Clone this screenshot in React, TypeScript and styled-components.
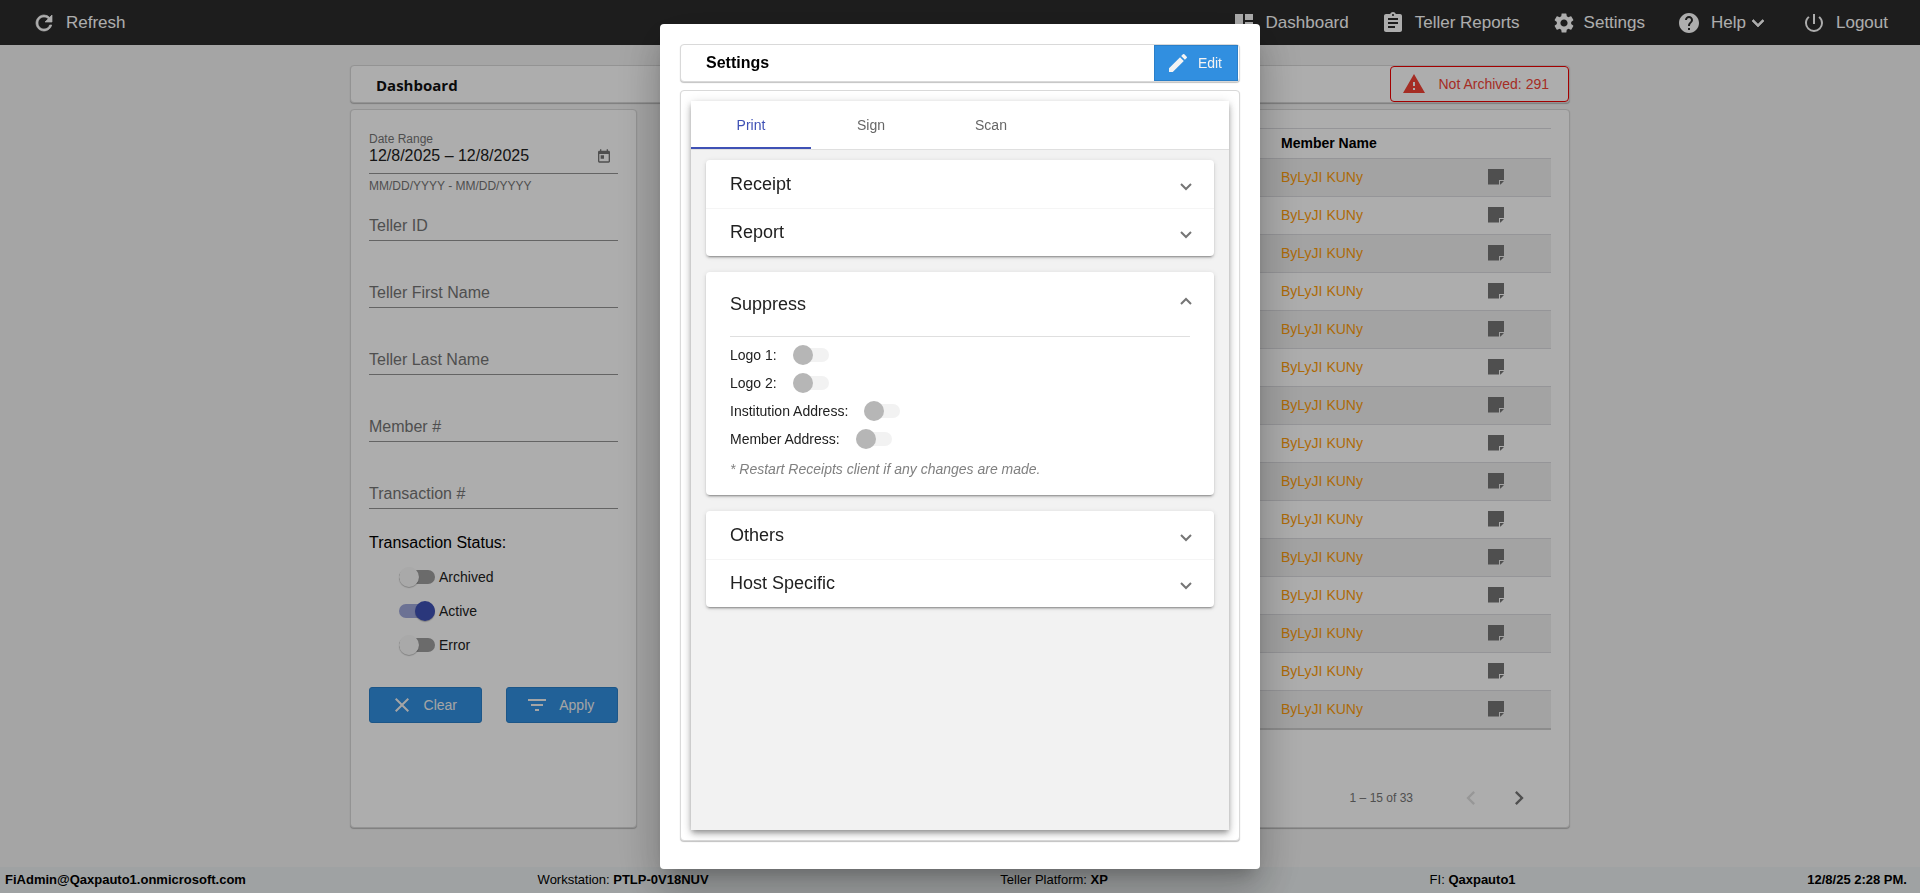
import React from "react";
import styled, { createGlobalStyle } from "styled-components";

const GlobalStyle = createGlobalStyle`
  *, *::before, *::after { box-sizing: border-box; }
  html, body, #root { height: 100%; }
  body {
    margin: 0;
    background: #f3f3f3;
    color: #000;
    font-family: "Liberation Sans", Arial, Helvetica, sans-serif;
    font-size: 14px;
  }
  button, input { font: inherit; color: inherit; }
  h1, h2, p { margin: 0; }
`;

const icons = {
  refresh:
    "M17.65 6.35A7.958 7.958 0 0 0 12 4c-4.42 0-7.99 3.58-7.99 8s3.57 8 7.99 8c3.73 0 6.84-2.55 7.73-6h-2.08A5.99 5.99 0 0 1 12 18c-3.31 0-6-2.69-6-6s2.69-6 6-6c1.66 0 3.14.69 4.22 1.78L13 11h7V4l-2.35 2.35z",
  dashboard: "M3 13h8V3H3v10zm0 8h8v-6H3v6zm10 0h8V11h-8v10zm0-18v6h8V3h-8z",
  reports:
    "M19 3h-4.18C14.4 1.84 13.3 1 12 1c-1.3 0-2.4.84-2.82 2H5c-1.1 0-2 .9-2 2v14c0 1.1.9 2 2 2h14c1.1 0 2-.9 2-2V5c0-1.1-.9-2-2-2zm-7 0c.55 0 1 .45 1 1s-.45 1-1 1-1-.45-1-1 .45-1 1-1zm2 14H7v-2h7v2zm3-4H7v-2h10v2zm0-4H7V7h10v2z",
  settings:
    "M19.14 12.94c.04-.3.06-.61.06-.94 0-.32-.02-.64-.07-.94l2.03-1.58a.49.49 0 0 0 .12-.61l-1.92-3.32a.488.488 0 0 0-.59-.22l-2.39.96c-.5-.38-1.03-.7-1.62-.94l-.36-2.54a.484.484 0 0 0-.48-.41h-3.84c-.24 0-.43.17-.47.41l-.36 2.54c-.59.24-1.13.57-1.62.94l-2.39-.96c-.22-.08-.47 0-.59.22L2.74 8.87c-.12.21-.08.47.12.61l2.03 1.58c-.05.3-.09.63-.09.94s.02.64.07.94l-2.03 1.58a.49.49 0 0 0-.12.61l1.92 3.32c.12.22.37.29.59.22l2.39-.96c.5.38 1.03.7 1.62.94l.36 2.54c.05.24.24.41.48.41h3.84c.24 0 .44-.17.47-.41l.36-2.54c.59-.24 1.13-.56 1.62-.94l2.39.96c.22.08.47 0 .59-.22l1.92-3.32c.12-.22.07-.47-.12-.61l-2.01-1.58zM12 15.6c-1.98 0-3.6-1.62-3.6-3.6s1.62-3.6 3.6-3.6 3.6 1.62 3.6 3.6-1.62 3.6-3.6 3.6z",
  help: "M12 2C6.48 2 2 6.48 2 12s4.48 10 10 10 10-4.48 10-10S17.52 2 12 2zm1 17h-2v-2h2v2zm2.07-7.75-.9.92C13.45 12.9 13 13.5 13 15h-2v-.5c0-1.1.45-2.1 1.17-2.83l1.24-1.26c.37-.36.59-.86.59-1.41 0-1.1-.9-2-2-2s-2 .9-2 2H8c0-2.21 1.79-4 4-4s4 1.79 4 4c0 .88-.36 1.68-.93 2.25z",
  expand: "M16.59 8.59 12 13.17 7.41 8.59 6 10l6 6 6-6z",
  power:
    "M13 3h-2v10h2V3zm4.83 2.17-1.42 1.42A6.92 6.92 0 0 1 19 12c0 3.87-3.13 7-7 7s-7-3.13-7-7c0-2.19 1.01-4.14 2.58-5.42L6.17 5.17A8.932 8.932 0 0 0 3 12a9 9 0 0 0 18 0c0-2.74-1.23-5.18-3.17-6.83z",
  warning: "M1 21h22L12 2 1 21zm12-3h-2v-2h2v2zm0-4h-2v-4h2v4z",
  calendar:
    "M19 4h-1V2h-2v2H8V2H6v2H5c-1.11 0-1.99.9-1.99 2L3 20a2 2 0 0 0 2 2h14c1.1 0 2-.9 2-2V6c0-1.1-.9-2-2-2zm0 16H5V9h14v11zM7 11h5v5H7z",
  close:
    "M19 6.41 17.59 5 12 10.59 6.41 5 5 6.41 10.59 12 5 17.59 6.41 19 12 13.41 17.59 19 19 17.59 13.41 12z",
  filter: "M10 18h4v-2h-4v2zM3 6v2h18V6H3zm3 7h12v-2H6v2z",
  edit: "M3 17.25V21h3.75L17.81 9.94l-3.75-3.75L3 17.25zM20.71 7.04a.996.996 0 0 0 0-1.41l-2.34-2.34a.996.996 0 0 0-1.41 0l-1.83 1.83 3.75 3.75 1.83-1.83z",
  note: "M4 4h16v11h-5v4.500H4V4zm12 12h4l-3.500 3.500h-.5z",
  prev: "M15.41 7.41 14 6l-6 6 6 6 1.41-1.41L10.83 12z",
  next: "M10 6 8.59 7.41 13.17 12l-4.58 4.59L10 18l6-6z",
};

type IconName = keyof typeof icons;

const Svg = styled.svg<{ $bold?: boolean }>`
  display: block;
  flex: none;
  fill: currentColor;
  stroke: ${(p) => (p.$bold ? "currentColor" : "none")};
  stroke-width: 0.7;
`;

const Icon = ({ name, size = 24, bold }: { name: IconName; size?: number; bold?: boolean }) => (
  <Svg width={size} height={size} viewBox="0 0 24 24" aria-hidden="true" $bold={bold}>
    <path d={icons[name]} />
  </Svg>
);

const Page = styled.div`
  display: flex;
  flex-direction: column;
  min-height: 100%;
`;

const TopBar = styled.header`
  display: flex;
  justify-content: space-between;
  height: 45px;
  padding: 0 32px;
  background: #2c2c2c;
  color: #fff;
`;

const NavGroup = styled.nav`
  display: flex;
  align-items: center;
  gap: 32px;
`;

const NavButton = styled.button<{ $gap?: number }>`
  display: flex;
  align-items: center;
  gap: ${(p) => p.$gap ?? 10}px;
  padding: 0;
  border: 0;
  background: none;
  font-size: 17px;
  line-height: 24px;
`;

const NavLabel = styled.span`
  display: flex;
  align-items: center;
`;

const Main = styled.main`
  flex: 1;
  display: flex;
  flex-direction: column;
  gap: 6px;
  width: 1220px;
  max-width: 100%;
  margin: 0 auto;
  padding: 20px 0 39px;
`;

const Card = styled.section`
  background: #fff;
  border: 1px solid #d9d9d9;
  border-radius: 4px;
  box-shadow: 0 1px 1px rgba(0, 0, 0, 0.24);
`;

const TitleCard = styled(Card)`
  display: flex;
  align-items: center;
  justify-content: space-between;
  height: 38px;
  padding-left: 25px;
`;

const PageTitle = styled.h1`
  padding-top: 2px;
  font-family: "Open Sans", "Noto Sans", sans-serif;
  font-size: 15px;
  font-weight: 700;
  color: #111;
`;

const AlertButton = styled.button`
  display: flex;
  align-items: center;
  gap: 12px;
  height: 36px;
  padding: 0 19px 0 11px;
  border: 1px solid #f00000;
  border-radius: 4px;
  background: #fff;
  color: #f44336;
`;

const Columns = styled.div`
  flex: 1;
  display: flex;
  gap: 32px;
`;

const FilterCard = styled(Card)`
  width: 287px;
  padding: 18px;
`;

const FilterForm = styled.form`
  display: flex;
  flex-direction: column;
`;

const DateField = styled.div`
  display: flex;
  flex-direction: column;
  height: 78px;
`;

const DateLabel = styled.label`
  padding-top: 3px;
  font-size: 12px;
  line-height: 16px;
  color: #757575;
`;

const DateRow = styled.div`
  display: flex;
  align-items: center;
  justify-content: space-between;
  height: 27px;
  padding: 0 6px 8px 0;
  border-bottom: 1px solid #949494;
  color: #757575;
`;

const DateInput = styled.input`
  flex: 1;
  min-width: 0;
  height: 18px;
  padding: 0;
  border: 0;
  background: none;
  font-size: 16px;
  color: #212121;
`;

const IconButton = styled.button`
  display: grid;
  place-items: center;
  padding: 0;
  border: 0;
  background: none;
  &:disabled { color: #dfdfdf; }
`;

const Hint = styled.span`
  margin-top: 5px;
  font-size: 12px;
  line-height: 14px;
  color: #757575;
`;

const TextInput = styled.input`
  height: 35px;
  margin-bottom: 32px;
  padding: 5px 0 0;
  border: 0;
  border-bottom: 1px solid #949494;
  background: none;
  font-size: 16px;
  &::placeholder { color: #757575; opacity: 1; }
`;

const StatusGroup = styled.fieldset`
  margin: -8px 0 0;
  padding: 0;
  border: 0;
`;

const StatusLegend = styled.legend`
  padding: 0;
  font-size: 16px;
  line-height: 20px;
`;

const StatusRow = styled.label`
  display: flex;
  align-items: center;
  gap: 4px;
  height: 34px;
  padding-left: 30px;
  color: #212121;
`;

const StatusList = styled.div`
  padding-top: 7px;
`;

const Switch = styled.input`
  appearance: none;
  display: flex;
  align-items: center;
  flex: none;
  width: 36px;
  height: 14px;
  margin: 0;
  border-radius: 7px;
  background: #9e9e9e;
  &::before {
    content: "";
    width: 20px;
    height: 20px;
    border-radius: 50%;
    background: #fafafa;
    box-shadow: 0 1px 1px rgba(0, 0, 0, 0.25);
  }
  &:checked { background: #9fa8da; justify-content: flex-end; }
  &:checked::before { background: #3f51b5; }
  &:disabled { background: #f2f2f2; }
  &:disabled::before { background: #b6b6b6; box-shadow: none; }
`;

const ButtonRow = styled.div`
  display: grid;
  grid-template-columns: 1fr 1fr;
  gap: 24px;
  padding-top: 25px;
`;

const PrimaryButton = styled.button<{ $square?: boolean }>`
  display: flex;
  align-items: center;
  justify-content: center;
  gap: ${(p) => (p.$square ? 8 : 10)}px;
  height: 36px;
  padding: 0 15px 0 11px;
  border: 1px solid #2a7fc9;
  border-radius: ${(p) => (p.$square ? 0 : 3)}px;
  background: #318fe0;
  color: #f3f3f3;
`;

const TableCard = styled(Card)`
  flex: 1;
  padding: 18px 18px 12px;
`;

const Table = styled.table`
  width: 100%;
  border-collapse: separate;
  border-spacing: 0;
  border-top: 1px solid #dcdce0;
  border-bottom: 2px solid #cfcfcf;
`;

const Row = styled.tr<{ $shaded?: boolean }>`
  height: 38px;
  background: ${(p) => (p.$shaded ? "#f0f0f0" : "#fff")};
`;

const HeadCell = styled.th`
  height: 29px;
  padding: 0 0 2px;
  text-align: left;
`;

const Cell = styled.td`
  padding: 0 0 2px;
  border-top: 1px solid #dcdce0;
  color: #ff9d0a;
  &:first-child { width: 593px; }
  &:last-child { width: 67px; color: #757575; }
`;

const Pager = styled.div`
  display: flex;
  align-items: center;
  justify-content: flex-end;
  gap: 20px;
  padding: 54px 18px 0 0;
  font-size: 12px;
  color: #757575;
`;

const PageText = styled.span`
  padding-right: 24px;
`;

const StatusBar = styled.footer`
  display: flex;
  justify-content: space-between;
  height: 26px;
  padding: 0 13px 0 5px;
  background: #ebeff0;
  font-size: 13px;
  line-height: 26px;
`;

const Platform = styled.span`
  padding-right: 30px;
`;

const Backdrop = styled.div`
  position: fixed;
  inset: 0;
  display: grid;
  justify-content: center;
  align-content: center;
  background: rgba(0, 0, 0, 0.32);
`;

const Dialog = styled.div`
  display: flex;
  flex-direction: column;
  gap: 8px;
  width: 600px;
  max-width: 100vw;
  height: calc(100vh - 48px);
  padding: 20px 20px 28px;
  border-radius: 4px;
  background: #fff;
  box-shadow: 0 11px 15px -7px rgba(0, 0, 0, 0.2),
    0 24px 38px 3px rgba(0, 0, 0, 0.14), 0 9px 46px 8px rgba(0, 0, 0, 0.12);
`;

const DialogTitleCard = styled(TitleCard)`
  padding-right: 1px;
`;

const DialogTitle = styled.h2`
  font-size: 16px;
  font-weight: 700;
`;

const DialogBody = styled(Card)`
  flex: 1;
  display: flex;
  padding: 10px;
`;

const TabPanel = styled.div`
  flex: 1;
  background: #f2f2f2;
  box-shadow: 0 3px 5px -1px rgba(0, 0, 0, 0.3), 0 5px 8px rgba(0, 0, 0, 0.14),
    0 1px 10px rgba(0, 0, 0, 0.12);
`;

const TabList = styled.div`
  display: flex;
  height: 49px;
  border-bottom: 1px solid #dfdfdf;
  background: #fff;
`;

const Tab = styled.button<{ $active?: boolean }>`
  width: 120px;
  padding: 2px 0 0;
  border: 0;
  border-bottom: 2px solid ${(p) => (p.$active ? "#3f51b5" : "transparent")};
  background: none;
  color: ${(p) => (p.$active ? "#3f51b5" : "#666")};
`;

const Accordion = styled.div`
  display: flex;
  flex-direction: column;
  gap: 16px;
  padding: 10px 15px;
`;

const PanelGroup = styled.div`
  border-radius: 4px;
  background: #fff;
  box-shadow: 0 3px 1px -2px rgba(0, 0, 0, 0.2), 0 2px 2px rgba(0, 0, 0, 0.14),
    0 1px 5px rgba(0, 0, 0, 0.12);
`;

const PanelHeader = styled.button<{ $open?: boolean }>`
  display: flex;
  align-items: center;
  justify-content: space-between;
  width: 100%;
  height: ${(p) => (p.$open ? 64 : 48)}px;
  padding: 0 22px 0 24px;
  border: 0;
  background: none;
  font-size: 18px;
  color: #212121;
  & + & { border-top: 1px solid #f5f5f5; }
`;

const Indicator = styled.svg<{ $open?: boolean }>`
  box-sizing: content-box;
  padding: ${(p) => (p.$open ? "0 0 6px" : "5px 0 0")};
  fill: none;
  stroke: #757575;
  stroke-width: 2;
`;

const Chevron = ({ open }: { open?: boolean }) => (
  <Indicator width="12" height="8" viewBox="0 0 12 8" aria-hidden="true" $open={open}>
    <path d={open ? "M1 7l5-5 5 5" : "M1 1l5 5 5-5"} />
  </Indicator>
);

const PanelContent = styled.div`
  margin: 0 24px;
  padding: 4px 0 10px;
  border-top: 1px solid #dfdfdf;
  color: #212121;
`;

const SettingRow = styled.label`
  display: flex;
  align-items: center;
  gap: 16px;
  height: 28px;
`;

const Note = styled.p`
  padding: 6px 0;
  line-height: 20px;
  font-style: italic;
  color: #808080;
`;

const textFields = ["Teller ID", "Teller First Name", "Teller Last Name", "Member #", "Transaction #"];
const statuses = [
  { label: "Archived", on: false },
  { label: "Active", on: true },
  { label: "Error", on: false },
];
const members = Array.from({ length: 15 }, () => "ByLyJI KUNy");
const suppressOptions = ["Logo 1:", "Logo 2:", "Institution Address:", "Member Address:"];

const CollapsedPanels = ({ titles }: { titles: string[] }) => (
  <PanelGroup>
    {titles.map((title) => (
      <PanelHeader key={title} type="button" aria-expanded={false}>
        {title}
        <Chevron />
      </PanelHeader>
    ))}
  </PanelGroup>
);

const SettingsDialog = () => (
  <Backdrop>
    <Dialog role="dialog" aria-modal="true" aria-labelledby="settings-title">
      <DialogTitleCard>
        <DialogTitle id="settings-title">Settings</DialogTitle>
        <PrimaryButton type="button" $square>
          <Icon name="edit" />
          Edit
        </PrimaryButton>
      </DialogTitleCard>
      <DialogBody>
        <TabPanel>
          <TabList role="tablist">
            {["Print", "Sign", "Scan"].map((name, i) => (
              <Tab key={name} type="button" role="tab" aria-selected={i === 0} $active={i === 0}>
                {name}
              </Tab>
            ))}
          </TabList>
          <Accordion>
            <CollapsedPanels titles={["Receipt", "Report"]} />
            <PanelGroup>
              <PanelHeader type="button" aria-expanded $open>
                Suppress
                <Chevron open />
              </PanelHeader>
              <PanelContent>
                {suppressOptions.map((label) => (
                  <SettingRow key={label}>
                    {label}
                    <Switch type="checkbox" role="switch" disabled />
                  </SettingRow>
                ))}
                <Note>* Restart Receipts client if any changes are made.</Note>
              </PanelContent>
            </PanelGroup>
            <CollapsedPanels titles={["Others", "Host Specific"]} />
          </Accordion>
        </TabPanel>
      </DialogBody>
    </Dialog>
  </Backdrop>
);

export default function App() {
  return (
    <>
      <GlobalStyle />
      <Page>
        <TopBar>
          <NavGroup aria-label="Page actions">
            <NavButton type="button">
              <Icon name="refresh" bold />
              Refresh
            </NavButton>
          </NavGroup>
          <NavGroup aria-label="Main">
            <NavButton type="button"><Icon name="dashboard" />Dashboard</NavButton>
            <NavButton type="button"><Icon name="reports" />Teller Reports</NavButton>
            <NavButton type="button" $gap={8}><Icon name="settings" />Settings</NavButton>
            <NavButton type="button">
              <Icon name="help" />
              <NavLabel>Help<Icon name="expand" bold /></NavLabel>
            </NavButton>
            <NavButton type="button"><Icon name="power" />Logout</NavButton>
          </NavGroup>
        </TopBar>
        <Main>
          <TitleCard>
            <PageTitle>Dashboard</PageTitle>
            <AlertButton type="button">
              <Icon name="warning" />
              Not Archived: 291
            </AlertButton>
          </TitleCard>
          <Columns>
            <FilterCard>
              <FilterForm>
                <DateField>
                  <DateLabel htmlFor="date-range">Date Range</DateLabel>
                  <DateRow>
                    <DateInput id="date-range" defaultValue="12/8/2025 – 12/8/2025" />
                    <IconButton type="button" aria-label="Open calendar">
                      <Icon name="calendar" size={16} />
                    </IconButton>
                  </DateRow>
                  <Hint>MM/DD/YYYY - MM/DD/YYYY</Hint>
                </DateField>
                {textFields.map((name) => (
                  <TextInput key={name} type="text" aria-label={name} placeholder={name} />
                ))}
                <StatusGroup>
                  <StatusLegend>Transaction Status:</StatusLegend>
                  <StatusList>
                    {statuses.map((s) => (
                      <StatusRow key={s.label}>
                        <Switch type="checkbox" role="switch" defaultChecked={s.on} />
                        {s.label}
                      </StatusRow>
                    ))}
                  </StatusList>
                </StatusGroup>
                <ButtonRow>
                  <PrimaryButton type="button"><Icon name="close" />Clear</PrimaryButton>
                  <PrimaryButton type="button"><Icon name="filter" />Apply</PrimaryButton>
                </ButtonRow>
              </FilterForm>
            </FilterCard>
            <TableCard>
              <Table>
                <thead>
                  <tr>
                    <HeadCell aria-hidden="true" />
                    <HeadCell>Member Name</HeadCell>
                    <HeadCell aria-hidden="true" />
                  </tr>
                </thead>
                <tbody>
                  {members.map((name, i) => (
                    <Row key={i} $shaded={i % 2 === 0}>
                      <Cell />
                      <Cell>{name}</Cell>
                      <Cell>
                        <IconButton type="button" aria-label="Open note">
                          <Icon name="note" />
                        </IconButton>
                      </Cell>
                    </Row>
                  ))}
                </tbody>
              </Table>
              <Pager>
                <PageText>1 – 15 of 33</PageText>
                <IconButton type="button" disabled aria-label="Previous page">
                  <Icon name="prev" size={28} />
                </IconButton>
                <IconButton type="button" aria-label="Next page">
                  <Icon name="next" size={28} />
                </IconButton>
              </Pager>
            </TableCard>
          </Columns>
        </Main>
        <StatusBar>
          <b>FiAdmin@Qaxpauto1.onmicrosoft.com</b>
          <span>Workstation: <b>PTLP-0V18NUV</b></span>
          <Platform>Teller Platform: <b>XP</b></Platform>
          <span>FI: <b>Qaxpauto1</b></span>
          <b>12/8/25 2:28 PM.</b>
        </StatusBar>
      </Page>
      <SettingsDialog />
    </>
  );
}
